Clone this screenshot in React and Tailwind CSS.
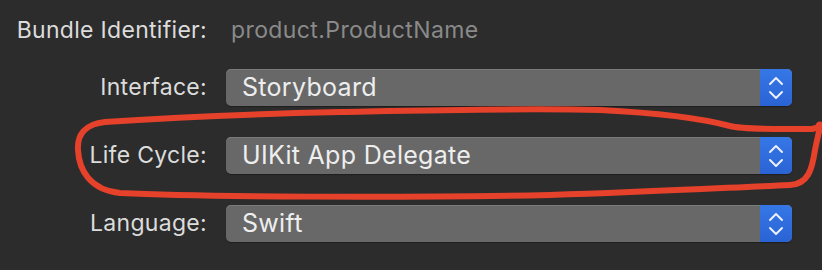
import React from 'react';

const Chevrons = () => (
    <svg width="16" height="26" viewBox="0 0 16 26" fill="none" stroke="#eaf0ff" strokeWidth="2" strokeLinecap="round" strokeLinejoin="round">
        <path d="M2 9 L8 3 L14 9" />
        <path d="M2 17 L8 23 L14 17" />
    </svg>
);

const Popup = ({ value }) => (
    <div className="flex h-[37px] w-[566px] overflow-hidden rounded-[5px] bg-[#686868] shadow-[inset_0_1px_0_#7a7a7a,0_1px_1px_#1e1e1e]">
        <div className="flex flex-1 items-center pl-4 text-[25px] tracking-[0.3px] text-[#eeeeee]">{value}</div>
        <div className="flex w-[32px] items-center justify-center bg-gradient-to-b from-[#3677e6] to-[#2a63d4]">
            <Chevrons />
        </div>
    </div>
);

const Row = ({ label, children, className = '' }) => (
    <div className={`flex items-center ${className}`}>
        <div className="w-[207px] shrink-0 whitespace-nowrap text-right text-[23px] tracking-[0.3px] text-[#dcdcdc]">{label}</div>
        <div className="ml-[19px]">{children}</div>
    </div>
);

const App = () => {
    return (
        <div className="relative h-[270px] w-[822px] overflow-hidden bg-[#2c2c2c] font-['Inter',sans-serif]">
            <div className="flex flex-col pt-[12px]">
                <Row label="Bundle Identifier:" className="h-[36px]">
                    <span className="pl-[5px] text-[23px] tracking-[0.4px] text-[#8a8a8a]">product.ProductName</span>
                </Row>
                <Row label="Interface:" className="mt-[21px]">
                    <Popup value="Storyboard" />
                </Row>
                <Row label="Life Cycle:" className="mt-[31px]">
                    <Popup value="UIKit App Delegate" />
                </Row>
                <Row label="Language:" className="mt-[31px]">
                    <Popup value="Swift" />
                </Row>
            </div>
            <svg className="pointer-events-none absolute left-0 top-0" width="822" height="270" viewBox="0 0 822 270" fill="none">
                <path
                    d="M820 127 L812 129 C780 129 745 130 730 126 C700 118 660 113 600 110 C520 108 440 110 340 112 C250 114 150 119 105 122 C85 124 77 135 78 150 C79 170 90 190 120 193 C200 197 400 198 550 195 C650 192 720 188 790 185 C808 184 812 170 815 150 C817 140 819 132 820 127"
                    stroke="#e5412b"
                    strokeWidth="6"
                    strokeLinecap="round"
                    strokeLinejoin="round"
                />
                <circle cx="820" cy="126" r="4.5" fill="#e5412b" />
            </svg>
        </div>
    );
};

export default App;
